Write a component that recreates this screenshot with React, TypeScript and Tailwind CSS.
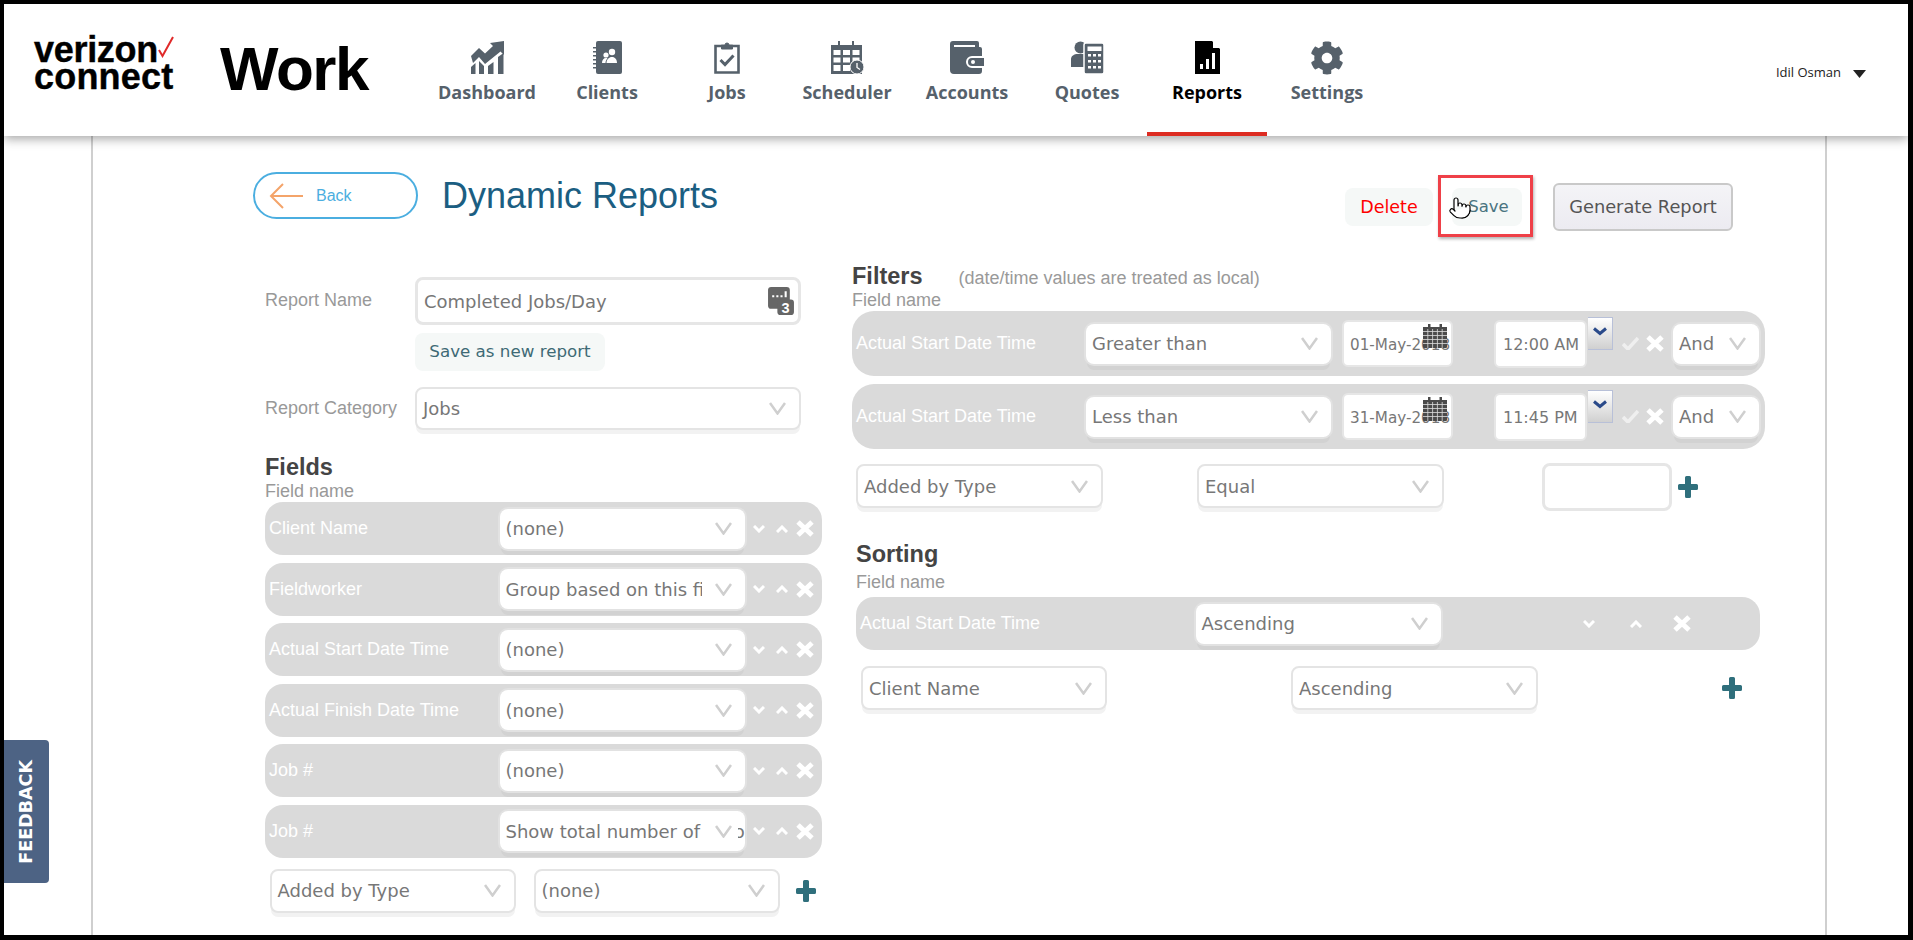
import { FaCog } from "react-icons/fa";
import { Pointer } from "lucide-react";

const iconGray = "#56616b";

const DashboardIcon = () => (
  <svg width="33" height="33" viewBox="0 0 33 33" fill={iconGray}>
    <path d="M0 15 L8 7 L14 12.500 L22 5 L19 2 L33 0 L33 14 L29.500 10.500 L14 23 L8 16 L2 22 Z" />
    <path d="M0 26 L4.500 22 V33 H0 Z M8 20 L13 25 V33 H8 Z M17 25 L22.500 21 V33 H17 Z M27 16 L32.500 12 V33 H27 Z" />
  </svg>
);

const ClientsIcon = () => (
  <svg width="29" height="33" viewBox="0 0 29 33" fill={iconGray}>
    <rect x="3" y="0" width="26" height="33" rx="2" />
    <path d="M0 6h5v1.500H0zM0 10h5v1.500H0zM0 14h5v1.500H0zM0 18h5v1.500H0zM0 22h5v1.500H0zM0 26h5v1.500H0z" />
    <circle cx="19" cy="11" r="3.200" fill="#fff" />
    <circle cx="13" cy="14" r="2.600" fill="#fff" />
    <path d="M13.500 22c0-3.500 2.500-6 5.500-6s5 2.500 5 6z M9 22c0-3 1.500-5 4-5 .6 0 1 .1 1.500.3-1 1.200-2 2.700-2 4.700z" fill="#fff" />
  </svg>
);

const JobsIcon = () => (
  <svg width="26" height="33" viewBox="0 0 26 33" fill="none" stroke={iconGray}>
    <path d="M8 5H1.500v26.500h23V5H18" strokeWidth="2.600" />
    <path d="M7.500 8V4h3.500a2 2 0 0 1 4 0h3.500v4z" fill={iconGray} strokeWidth="1" />
    <path d="M6.500 19l4.500 4.500 8.500-9" strokeWidth="3" />
  </svg>
);

const SchedulerIcon = () => (
  <svg width="33" height="33" viewBox="0 0 33 33" fill={iconGray}>
    <path d="M0 4h31v29H0z" />
    <path d="M7 0h2v7H7zM21 0h2v7h-2z" />
    <path
      fill="#fff"
      d="M2.500 9h7v5h-7zM12 9h7v5h-7zM21.500 9h7v5h-7zM2.500 16.500h7v5h-7zM12 16.500h7v5h-7zM21.500 16.500h7v5h-7zM2.500 24h7v6h-7zM12 24h7v6h-7z"
    />
    <circle cx="26" cy="26" r="7" stroke="#fff" strokeWidth="1" />
    <path d="M26 22v4.500l3 2" stroke="#fff" strokeWidth="1.300" fill="none" />
  </svg>
);

const AccountsIcon = () => (
  <svg width="34" height="33" viewBox="0 0 34 33" fill={iconGray}>
    <path d="M3 0h24a2 2 0 0 1 2 2v4h1a2 2 0 0 1 2 2v7H22a6 6 0 0 0 0 12h10v3a3 3 0 0 1-3 3H4a4 4 0 0 1-4-4V3a3 3 0 0 1 3-3z" />
    <path d="M4 4h21v2H4z" fill="#fff" />
    <path d="M22 17h12v8H22a4 4 0 0 1 0-8z" />
    <circle cx="23" cy="21" r="2" fill="#fff" />
  </svg>
);

const QuotesIcon = () => (
  <svg width="33" height="33" viewBox="0 0 33 33" fill={iconGray}>
    <circle cx="9.500" cy="6.500" r="6" />
    <path d="M0 26v-8c0-3 3-5 7-5h6v13z" />
    <rect x="13" y="2" width="20" height="31" rx="2" stroke="#fff" strokeWidth="1.500" />
    <path
      fill="#fff"
      d="M16.500 5.500h14v4.500h-14zM17 13h3v2.500h-3zM22 13h3v2.500h-3zM27 13h3v2.500h-3zM17 19h3v2.500h-3zM22 19h3v2.500h-3zM27 19h3v2.500h-3zM17 25h3v2.500h-3zM22 25h3v2.500h-3zM27 25h3v2.500h-3z"
    />
  </svg>
);

const ReportsIcon = () => (
  <svg width="25" height="33" viewBox="0 0 25 33" fill="#000">
    <path d="M0 0h17l8 8v25H0z" />
    <path d="M18 0l7 7h-7z" fill="#fff" />
    <path d="M5 23h3v5H5zM11 18h3v10h-3zM17 12h3v16h-3z" fill="#fff" />
  </svg>
);

const navItems = [
  { label: "Dashboard", icon: <DashboardIcon /> },
  { label: "Clients", icon: <ClientsIcon /> },
  { label: "Jobs", icon: <JobsIcon /> },
  { label: "Scheduler", icon: <SchedulerIcon /> },
  { label: "Accounts", icon: <AccountsIcon /> },
  { label: "Quotes", icon: <QuotesIcon /> },
  { label: "Reports", icon: <ReportsIcon />, active: true },
  { label: "Settings", icon: <FaCog size={34} color={iconGray} /> },
];

const Chevron = () => (
  <svg width="17" height="13" viewBox="0 0 17 13" fill="none" stroke="#cfcfcf" strokeWidth="2.500">
    <path d="M1 1l7.500 10.500L16 1" />
  </svg>
);

const SmallDown = () => (
  <svg width="12" height="8" viewBox="0 0 12 8" fill="none" stroke="#fff" strokeWidth="3">
    <path d="M1 1l5 5 5-5" />
  </svg>
);

const SmallUp = () => (
  <svg width="12" height="8" viewBox="0 0 12 8" fill="none" stroke="#fff" strokeWidth="3">
    <path d="M1 7l5-5 5 5" />
  </svg>
);

const CloseX = () => (
  <svg width="18" height="17" viewBox="0 0 18 17" fill="none" stroke="#fff" strokeWidth="5">
    <path d="M2 2l14 13M16 2L2 15" />
  </svg>
);

const Plus = () => (
  <svg width="20" height="22" viewBox="0 0 20 22" fill="#2f6f7c">
    <path d="M7 1.500a1.500 1.500 0 0 1 1.500-1.500h3A1.500 1.500 0 0 1 13 1.500V8h5.500a1.500 1.500 0 0 1 1.500 1.500v3a1.500 1.500 0 0 1-1.500 1.500H13v6.500a1.500 1.500 0 0 1-1.500 1.500h-3A1.500 1.500 0 0 1 7 20.500V14H1.500A1.500 1.500 0 0 1 0 12.500v-3A1.500 1.500 0 0 1 1.500 8H7z" />
  </svg>
);

const CalendarIcon = () => (
  <svg width="24" height="25" viewBox="0 0 24 25" className="absolute left-[79px] top-[2px]">
    <path d="M0 3h24v20a1 1 0 0 1-1 1H1a1 1 0 0 1-1-1z" fill="#4a4a4a" />
    <path d="M5 0h2.500v5H5zM16.500 0H19v5h-2.500z" fill="#4a4a4a" />
    <path
      stroke="#ddd"
      strokeWidth="0.800"
      fill="none"
      d="M0 7.500h24M0 11.500h24M0 15.500h24M0 19.500h24M4.800 5v19M9.600 5v19M14.400 5v19M19.200 5v19"
    />
  </svg>
);

const ReportIcon = () => (
  <svg width="26" height="28" viewBox="0 0 25 27" className="shrink-0">
    <rect x="0" y="0" width="21" height="21" rx="3" fill="#666" />
    <path d="M4 8h2v2H4zM8 8h2v2H8zM12 8h2v2h-2zM16 4h2v6h-2z" fill="#fff" />
    <rect x="9" y="12" width="16" height="15" rx="3" fill="#666" />
    <text x="17" y="25" textAnchor="middle" fontSize="14" fontWeight="700" fill="#fff" fontFamily="Liberation Sans">
      3
    </text>
  </svg>
);

const boxFont = "font-['DejaVu_Sans',sans-serif] text-[18px] text-[#777]";
const timeFont = "font-['DejaVu_Sans',sans-serif] text-[16px] text-[#777]";

type SelectProps = { value: string; className: string; onRow?: boolean };

const Select = ({ value, className, onRow }: SelectProps) => (
  <div
    className={`relative flex shrink-0 items-center overflow-hidden rounded-lg bg-white pl-[6px] ${boxFont} ${className} ${
      onRow
        ? "shadow-[0_0_0_2px_#e2e2e2,0_7px_0_-1px_#d2d2d2]"
        : "border-2 border-[#e4e4e4] shadow-[0_5px_0_-1px_#f2f2f2]"
    }`}
  >
    <span className="whitespace-nowrap">{value}</span>
    <span className="absolute inset-y-0 right-[7px] flex w-[36px] items-center justify-end bg-white pr-[6px]">
      <Chevron />
    </span>
  </div>
);

const RowLabel = ({ text, className }: { text: string; className: string }) => (
  <span className={`-mt-[1px] shrink-0 pl-[4px] text-[18px] leading-none text-white ${className}`}>{text}</span>
);

const fieldRows = [
  { name: "Client Name", value: "(none)" },
  { name: "Fieldworker", value: "Group based on this field" },
  { name: "Actual Start Date Time", value: "(none)" },
  { name: "Actual Finish Date Time", value: "(none)" },
  { name: "Job #", value: "(none)" },
  { name: "Job #", value: "Show total number of records" },
];

const FieldRow = ({ name, value }: { name: string; value: string }) => (
  <div className="flex h-[53px] items-center rounded-[18px] bg-[#dadada]">
    <RowLabel text={name} className="w-[234.500px]" />
    <Select value={value} className="h-[40px] w-[245px]" onRow />
    <div className="ml-[8px] flex items-center">
      <SmallDown />
      <span className="ml-[11.500px]">
        <SmallUp />
      </span>
      <span className="ml-[8px]">
        <CloseX />
      </span>
    </div>
  </div>
);

const filterRows = [
  { op: "Greater than", date: "01-May-2018", time: "12:00 AM" },
  { op: "Less than", date: "31-May-2018", time: "11:45 PM" },
];

const FilterRow = ({ op, date, time }: { op: string; date: string; time: string }) => (
  <div className="flex h-[65px] items-center rounded-[22px] bg-[#dadada]">
    <RowLabel text="Actual Start Date Time" className="w-[234px]" />
    <Select value={op} className="h-[40px] w-[245px]" onRow />
    <div
      className={`relative ml-[11px] flex h-[47px] w-[111px] items-center overflow-hidden rounded-md border-2 border-[#e6e6e6] bg-white pl-[6px] ${timeFont}`}
    >
      <span className="mt-[3px] whitespace-nowrap text-[15.200px]">{date}</span>
      <CalendarIcon />
    </div>
    <div
      className={`ml-[41px] flex h-[48px] w-[93px] items-center overflow-hidden whitespace-nowrap rounded-md border-2 border-[#e6e6e6] bg-white pl-[7px] ${timeFont}`}
    >
      <span className="mt-[3px]">{time}</span>
    </div>
    <div className="mb-[21px] ml-[1px] flex h-[33px] w-[25px] justify-center border-y border-r border-[#b8c0d8] bg-gradient-to-b from-white to-[#d0d0d0] pt-[9px]">
      <svg width="14" height="9" viewBox="0 0 14 9" fill="none" stroke="#2a4a8a" strokeWidth="3">
        <path d="M1 1.500l6 5 6-5" />
      </svg>
    </div>
    <svg width="17" height="13" viewBox="0 0 17 13" fill="none" stroke="#efefef" strokeWidth="3.500" className="ml-[9px]">
      <path d="M1 7l5 5L16 1" />
    </svg>
    <span className="ml-[7px]">
      <CloseX />
    </span>
    <Select value="And" className="ml-[9px] h-[40px] w-[86px]" onRow />
  </div>
);

const App = () => {
  const buttonClass = "flex items-center justify-center rounded-lg bg-[#f5f8f7] font-['DejaVu_Sans',sans-serif]";
  const headingClass = "h-[28px] text-[23.500px] font-bold leading-[28px] text-[#444]";
  const fieldNameClass = "h-[20px] text-[18px] leading-[20px] text-[#999]";

  return (
    <div className="h-[940px] w-[1913px] overflow-hidden bg-black pb-[5px] pl-[4px] pr-[5px] pt-[4px] font-['Liberation_Sans',sans-serif]">
      <div className="relative flex h-full flex-col overflow-hidden bg-white">
        <header className="relative z-10 flex h-[132px] shrink-0 bg-white shadow-[0_3px_10px_rgba(0,0,0,0.35)]">
          <div className="flex w-[423px] shrink-0 items-start pl-[30px] pt-[32px]">
            <div className="relative w-[186px] text-[36px] font-bold leading-[27px] tracking-[-0.300px] text-black [-webkit-text-stroke:0.4px_black]">
              <div>verizon</div>
              <div className="tracking-[0.200px]">connect</div>
              <svg width="16" height="22" viewBox="0 0 16 22" fill="none" stroke="#e02a2a" strokeWidth="2" className="absolute left-[124px] top-[0px]">
                <path d="M1 14l3.500 6L15 1" />
              </svg>
            </div>
            <span className="-mt-[2px] text-[62px] font-bold leading-[70px] tracking-[-1.500px] text-black">Work</span>
          </div>
          <nav className="flex font-['Open_Sans',sans-serif]">
            {navItems.map((item) => (
              <div
                key={item.label}
                className={`flex h-[132px] w-[120px] flex-col items-center pt-[37px] ${
                  item.active ? "border-b-4 border-[#dd2c22] text-black" : "text-[#56616b]"
                }`}
              >
                <div className="flex h-[33px] items-center">{item.icon}</div>
                <span className="mt-[6px] text-[18px] font-bold leading-[24px]">{item.label}</span>
              </div>
            ))}
          </nav>
          <div className="ml-auto flex items-center gap-[12px] pr-[42px] pt-[5px] font-['Open_Sans',sans-serif] text-[13px] text-[#222]">
            <span>Idil Osman</span>
            <svg width="13" height="8" viewBox="0 0 13 8" fill="#222" className="mt-[3px]">
              <path d="M0 0h13L6.500 8z" />
            </svg>
          </div>
        </header>

        <main className="ml-[87px] w-[1736px] flex-1 border-x-2 border-[#cfcfcf]">
          <div className="flex h-[101px] pl-[160px] pr-[92px]">
            <button className="mt-[36px] flex h-[47px] w-[165px] items-center rounded-full border-2 border-[#4baee0] pl-[14px] text-[16px] text-[#4baee0]">
              <svg width="34" height="26" viewBox="0 0 34 26" fill="none" stroke="#f4a46a" strokeWidth="2">
                <path d="M34 13H2M14 1L2 13l12 12" />
              </svg>
              <span className="ml-[13px]">Back</span>
            </button>
            <h1 className="ml-[24px] mt-[36px] h-[47px] text-[36px] leading-[47px] text-[#1b5e82]">Dynamic Reports</h1>
            <div className="ml-auto flex items-start">
              <button className={`${buttonClass} mt-[52px] h-[38px] w-[88px] text-[17.500px] text-[#f00]`}>Delete</button>
              <div className="relative ml-[19px] mt-[52px]">
                <button className={`${buttonClass} h-[38px] w-[70px] pl-[3px] text-[16.500px] text-[#4a7480]`}>Save</button>
                <div className="absolute -bottom-[11px] -left-[14px] -right-[11px] -top-[13px] border-[3px] border-[#ef4048] shadow-[1px_2px_3px_rgba(0,0,0,0.3)]" />
                <Pointer size={24} strokeWidth={1.200} fill="#fff" className="absolute -left-[4px] top-[8px] text-black" />
              </div>
              <button className="ml-[31px] mt-[47px] flex h-[48px] w-[180px] items-center justify-center rounded-md border-2 border-[#c9c9c9] bg-gradient-to-b from-[#f4f4f7] to-[#ecebf1] font-['DejaVu_Sans',sans-serif] text-[17.800px] text-[#555]">
                Generate Report
              </button>
            </div>
          </div>

          <div className="flex">
            <section className="ml-[172px] w-[557px] shrink-0 pt-[40px]">
              <div className="flex">
                <span className="h-[48px] w-[150px] shrink-0 text-[18px] leading-[46px] text-[#999]">Report Name</span>
                <div
                  className={`flex h-[48px] w-[386px] items-center justify-between rounded-lg border-[3px] border-[#e6e6e6] bg-white pl-[6px] pr-[4px] ${boxFont}`}
                >
                  <span>Completed Jobs/Day</span>
                  <ReportIcon />
                </div>
              </div>
              <button className={`${buttonClass} ml-[150px] mt-[8px] h-[38px] w-[190px] text-[16.700px] text-[#3e6a75]`}>
                Save as new report
              </button>
              <div className="mt-[16px] flex items-center">
                <span className="w-[150px] shrink-0 text-[18px] text-[#999]">Report Category</span>
                <Select value="Jobs" className="h-[43px] w-[386px]" />
              </div>
              <h2 className={`${headingClass} mt-[23px]`}>Fields</h2>
              <div className={fieldNameClass}>Field name</div>
              <div className="mt-[1px] flex flex-col gap-[7.600px]">
                {fieldRows.map((row, i) => (
                  <FieldRow key={i} name={row.name} value={row.value} />
                ))}
              </div>
              <div className="ml-[4.500px] mt-[11px] flex items-center">
                <Select value="Added by Type" className="h-[44px] w-[246px]" />
                <Select value="(none)" className="ml-[18px] h-[44px] w-[246px]" />
                <span className="ml-[16px]">
                  <Plus />
                </span>
              </div>
            </section>

            <section className="ml-[30px] w-[913px] shrink-0 pt-[25px]">
              <div className="flex h-[28px] items-baseline">
                <h2 className={headingClass}>Filters</h2>
                <span className="ml-[36px] text-[18px] leading-[28px] text-[#999]">(date/time values are treated as local)</span>
              </div>
              <div className={fieldNameClass}>Field name</div>
              <div className="mt-[1px] flex flex-col gap-[8px]">
                {filterRows.map((row) => (
                  <FilterRow key={row.op} {...row} />
                ))}
              </div>
              <div className="ml-[4px] mt-[15px] flex items-start">
                <Select value="Added by Type" className="h-[44px] w-[247px]" />
                <Select value="Equal" className="ml-[94px] h-[44px] w-[247px]" />
                <div className="-mt-[1px] ml-[98px] h-[48px] w-[130px] rounded-lg border-[3px] border-[#e6e6e6]" />
                <span className="ml-[6px] mt-[12px]">
                  <Plus />
                </span>
              </div>

              <h2 className={`${headingClass} ml-[4px] mt-[29px]`}>Sorting</h2>
              <div className={`${fieldNameClass} ml-[4px] mt-[4px]`}>Field name</div>
              <div className="ml-[4px] mt-[5px] flex h-[53px] w-[904px] items-center rounded-[18px] bg-[#dadada]">
                <RowLabel text="Actual Start Date Time" className="w-[339.500px]" />
                <Select value="Ascending" className="h-[40px] w-[245px]" onRow />
                <span className="ml-[142px]">
                  <SmallDown />
                </span>
                <span className="ml-[35px]">
                  <SmallUp />
                </span>
                <span className="ml-[31px]">
                  <CloseX />
                </span>
              </div>
              <div className="ml-[9px] mt-[16px] flex items-center">
                <Select value="Client Name" className="h-[44px] w-[246px]" />
                <Select value="Ascending" className="ml-[184px] h-[44px] w-[247px]" />
                <span className="ml-[184px]">
                  <Plus />
                </span>
              </div>
            </section>
          </div>
        </main>

        <button className="absolute left-0 top-[736px] flex h-[143px] w-[45px] items-center justify-center rounded-r-[4px] bg-[#4d6384] font-['DejaVu_Sans',sans-serif] text-[17.500px] font-bold text-white [writing-mode:vertical-rl]">
          <span className="rotate-180">FEEDBACK</span>
        </button>
      </div>
    </div>
  );
};

export default App;
